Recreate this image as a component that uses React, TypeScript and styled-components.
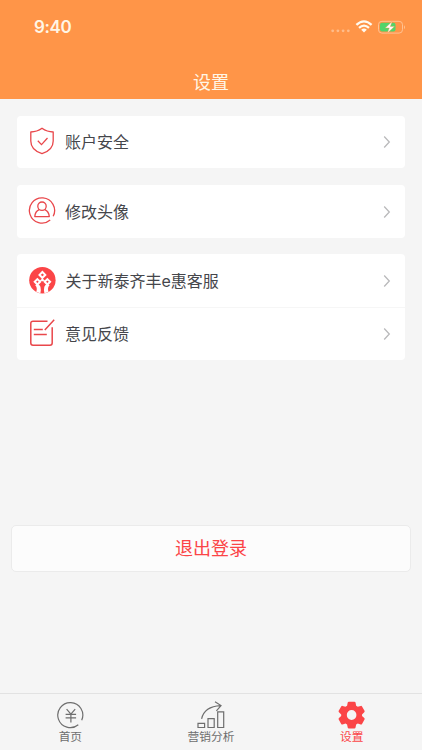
import React from "react";
import styled, { createGlobalStyle } from "styled-components";

const Global = createGlobalStyle`
  * { box-sizing: border-box; }
  body { margin: 0; background: #f5f5f5; font-family: Inter, "Noto Sans CJK SC", sans-serif; }
`;

const Screen = styled.div`
  width: 422px;
  height: 750px;
  display: flex;
  flex-direction: column;
  background: #f5f5f5;
  overflow: hidden;
`;

const Header = styled.header`
  height: 99px;
  flex: none;
  background: #ff9548;
  color: #fff6e6;
  display: flex;
  flex-direction: column;
`;

const StatusBar = styled.div`
  height: 53px;
  display: flex;
  align-items: center;
  justify-content: space-between;
  padding: 0 16px 0 34px;
`;

const Time = styled.span`
  font-size: 17px;
  font-weight: 600;
  line-height: 20px;
  letter-spacing: -0.35px;
`;

const StatusIcons = styled.svg`
  display: block;
  width: 76px;
  height: 20px;
`;

const Title = styled.h1`
  margin: 0;
  padding-top: 17px;
  font-size: 18px;
  line-height: 26px;
  font-weight: 400;
  text-align: center;
`;

const Content = styled.main`
  flex: 1;
  padding: 17px 17px 0;
  display: flex;
  flex-direction: column;
`;

const Card = styled.section<{ $gap?: number }>`
  background: #fff;
  border-radius: 4px;
  margin-bottom: ${(p) => p.$gap ?? 16}px;
`;

const Row = styled.div<{ $height: number; $divided?: boolean; $top?: number }>`
  height: ${(p) => p.$height}px;
  border-bottom: ${(p) => (p.$divided ? "1px solid #f6f6f6" : "none")};
  padding: ${(p) => p.$top ?? 0}px 14px 0 11px;
  display: flex;
  align-items: center;
`;

const RowIcon = styled.svg`
  width: 28px;
  height: 28px;
  flex: none;
  fill: none;
  stroke: #e9474b;
  stroke-width: 1.3;
  margin-top: -2px;
`;

const RowLabel = styled.span<{ $shift?: number }>`
  flex: 1;
  margin-left: ${(p) => 9 + (p.$shift ?? 0)}px;
  font-size: 16px;
  line-height: 24px;
  color: #45464b;
`;

const Chevron = styled.svg`
  width: 8px;
  height: 14px;
  fill: none;
  stroke: #b9b9bb;
  stroke-width: 1.3;
`;

const LogoutButton = styled.button`
  margin: 149px -6px 0;
  height: 47px;
  padding: 1px 0 0;
  border: 1px solid #ebebeb;
  border-radius: 5px;
  background: #fcfcfc;
  color: #fb4547;
  font: 400 18px/26px Inter, "Noto Sans CJK SC", sans-serif;
`;

const TabBar = styled.nav`
  height: 57px;
  flex: none;
  border-top: 1px solid #e2e2e2;
  background: #f5f5f5;
  display: grid;
  grid-template-columns: repeat(3, 1fr);
`;

const Tab = styled.div<{ $active?: boolean }>`
  display: flex;
  flex-direction: column;
  align-items: center;
  padding-top: 6px;
  font-size: 11.7px;
  line-height: 16px;
  color: ${(p) => (p.$active ? "#fb4547" : "#6e6e6e")};
`;

const TabIcon = styled.svg`
  width: 30px;
  height: 30px;
  flex: none;
  margin-bottom: -1px;
  fill: none;
  stroke: currentColor;
  stroke-width: 1.2;
`;

const Arrow = () => (
  <Chevron viewBox="0 0 8 14">
    <path d="M1.2 1.5 6.3 7 1.2 12.5" />
  </Chevron>
);

const ShieldIcon = () => (
  <RowIcon viewBox="0 0 28 28">
    <path d="M14 1.2Q19 4.8 25.2 5V14Q25.2 23.2 14 26.6Q2.8 23.2 2.8 14V5Q9 4.8 14 1.2Z" strokeLinejoin="round" />
    <path d="m9.8 13.8 3.7 3.8 6-6.6" />
  </RowIcon>
);

const PersonIcon = () => (
  <RowIcon viewBox="0 0 28 28">
    <path d="M25.2 19.2A12.6 12.6 0 1 0 22.2 23" />
    <circle cx="14" cy="9.2" r="4.2" />
    <path d="M11.2 12.7C8.3 14 7 16.1 6.8 19.6H21.3C21 16.1 19.7 14 16.8 12.7" strokeLinejoin="round" />
  </RowIcon>
);

const BrandIcon = () => (
  <RowIcon viewBox="0 0 28 28">
    <circle cx="14.4" cy="14.2" r="13.2" fill="#fb4547" stroke="none" />
    <g fill="#fb4547" stroke="#fff" strokeWidth="2">
      <path d="m14.4 6 2.9 2.9-2.9 2.9-2.9-2.9Z" />
      <path d="m9.4 13.1 2.7 2.7-2.7 2.7-2.7-2.7Z" />
      <path d="m19.4 13.1 2.7 2.7-2.7 2.7-2.7-2.7Z" />
    </g>
    <path d="M14.4 12v3.2m-2.2 0 2.2-2 2.2 2" stroke="#fff" />
    <path d="M7.2 19.3 9.4 17.8Q14 19.3 12.4 27.2L8.3 26Q9.7 21.5 7.2 19.3ZM21.6 19.3 19.4 17.8Q14.8 19.3 16.4 27.2L20.5 26Q19.1 21.5 21.6 19.3Z" fill="#fff" stroke="none" />
  </RowIcon>
);

const FeedbackIcon = () => (
  <RowIcon viewBox="0 0 28 28">
    <g transform="translate(0 -1)" strokeWidth="1.5">
      <path d="M19.5 3.2H5Q2.8 3.2 2.8 5.4V25Q2.8 27.2 5 27.2H22Q24.2 27.2 24.2 25V9.2" />
      <path d="M5.8 11.5h9M5.8 16.5h13M16.8 12 26.2 1.8" />
    </g>
  </RowIcon>
);

const YuanIcon = () => (
  <TabIcon viewBox="-0.6 0.3 30 30">
    <path d="M26.1 20.5A12.5 12.5 0 1 0 22.7 25" />
    <path d="m11 9.5 4.3 5 4.3-5M10 14.7h10.5M10 18.2h10.5M15.3 14.7v8" />
  </TabIcon>
);

const ChartIcon = () => (
  <TabIcon viewBox="0 0 30 30">
    <path d="M2 23.3h6.6v4.2H2ZM12 18.6h6.2v8.9H12ZM21.7 11.8h6v15.7h-6Z" />
    <path d="M5.6 18.8Q8.5 6.5 24.6 5.7M19 1.8l6 3.8-4.6 5.2" />
  </TabIcon>
);

const GearIcon = () => (
  <TabIcon viewBox="0 0 30 30">
    <path
      transform="translate(1 .5) scale(.89 .96)"
      d="M10.9 2.2Q11.1 1.2 12.2 1.2H18.4Q19.5 1.2 19.7 2.2L20.4 5.5 22.2 6.6 25.5 5.6Q26.5 5.3 27 6.2L29.8 10.8Q30.3 11.7 29.5 12.3L27 14.5V16.1L29.5 18.3Q30.3 18.9 29.8 19.8L27 24.4Q26.5 25.3 25.5 25L22.2 24 20.4 25.1 19.7 28.2Q19.5 29.2 18.4 29.2H12.2Q11.1 29.2 10.9 28.2L10.2 25.1 8.4 24 5.1 25Q4.1 25.3 3.6 24.4L.8 19.8Q.3 18.9 1.1 18.3L3.6 16.1V14.5L1.1 12.3Q.3 11.7.8 10.8L3.6 6.2Q4.1 5.3 5.1 5.6L8.4 6.6 10.2 5.5ZM15.3 10A5.4 5.2 0 1 0 15.3 20.4A5.4 5.2 0 1 0 15.3 10Z"
      fill="currentColor"
      fillRule="evenodd"
      stroke="none"
    />
  </TabIcon>
);

export default function App() {
  return (
    <>
      <Global />
      <Screen>
        <Header>
          <StatusBar>
            <Time>9:40</Time>
            <StatusIcons viewBox="330 16 76 20">
              <g fill="#ffbd8b">
                <circle cx="332.7" cy="29.8" r="1.4" />
                <circle cx="337.9" cy="29.8" r="1.4" />
                <circle cx="343.1" cy="29.8" r="1.4" />
                <circle cx="348.3" cy="29.8" r="1.4" />
              </g>
              <g fill="none" stroke="#fffaf0" strokeWidth="2.3">
                <path d="M356.4 23.9Q364 16.9 371.6 23.9" />
                <path d="M359 26.9Q364 22.4 369 26.9" />
              </g>
              <path d="M361.2 28.7Q364 26.5 366.8 28.7L364 31.6Z" fill="#fffaf0" />
              <rect x="378.5" y="20.3" width="24" height="11.8" rx="3.4" fill="none" stroke="#ffc292" />
              <rect x="380" y="21.8" width="15.5" height="8.8" rx="2" fill="#52d46a" />
              <path d="M404 24.2Q406 26.2 404 28.2Z" fill="#ffc292" />
              <path d="m392.1 20.4-6.8 6.5h4l-1.9 5.1 7-6.4h-4.1Z" fill="#fff" stroke="#ff9548" strokeWidth=".4" />
            </StatusIcons>
          </StatusBar>
          <Title>设置</Title>
        </Header>
        <Content>
          <Card $gap={16.6}>
            <Row $height={52.4}>
              <ShieldIcon />
              <RowLabel>账户安全</RowLabel>
              <Arrow />
            </Row>
          </Card>
          <Card>
            <Row $height={53} $top={1}>
              <PersonIcon />
              <RowLabel>修改头像</RowLabel>
              <Arrow />
            </Row>
          </Card>
          <Card>
            <Row $height={54} $top={1} $divided>
              <BrandIcon />
              <RowLabel $shift={0.5}>关于新泰齐丰e惠客服</RowLabel>
              <Arrow />
            </Row>
            <Row $height={52}>
              <FeedbackIcon />
              <RowLabel>意见反馈</RowLabel>
              <Arrow />
            </Row>
          </Card>
          <LogoutButton>退出登录</LogoutButton>
        </Content>
        <TabBar>
          <Tab>
            <YuanIcon />
            <span>首页</span>
          </Tab>
          <Tab>
            <ChartIcon />
            <span>营销分析</span>
          </Tab>
          <Tab $active>
            <GearIcon />
            <span>设置</span>
          </Tab>
        </TabBar>
      </Screen>
    </>
  );
}
